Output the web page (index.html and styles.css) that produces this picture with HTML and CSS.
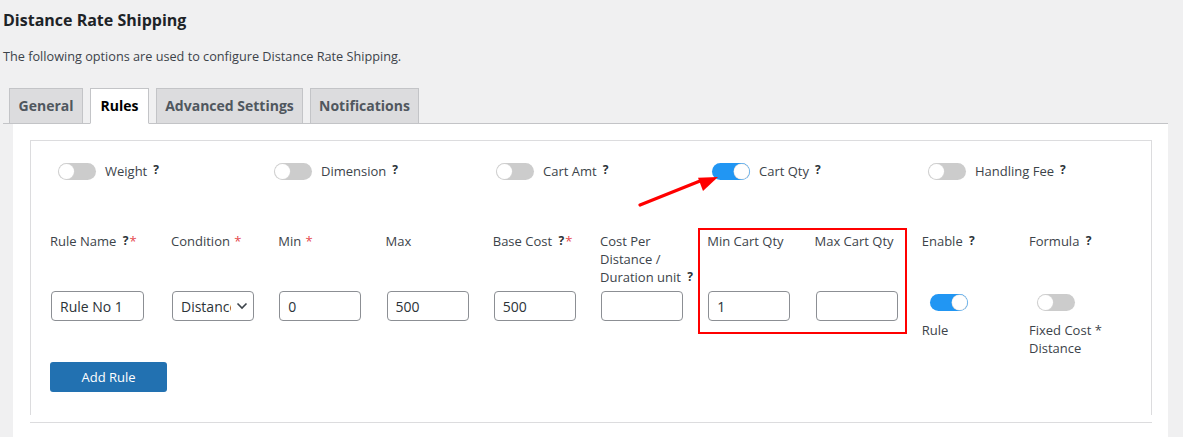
FILE: index.html
```html
<!DOCTYPE html>
<html lang="en">
<head>
  <meta charset="UTF-8" />
  <title>Distance Rate Shipping</title>
  <link rel="stylesheet" href="styles.css">
</head>
<body>
  <div class="wrap">
    <h2 class="title">Distance Rate Shipping</h2>
    <p class="desc">The following options are used to configure Distance Rate Shipping.</p>

    <nav class="tabs">
      <a class="tab tab-general">General</a>
      <a class="tab tab-rules active">Rules</a>
      <a class="tab tab-advanced">Advanced Settings</a>
      <a class="tab tab-notify">Notifications</a>
    </nav>

    <div class="panel">
      <div class="box">
        <div class="switches">
          <div class="switch-item"><span class="switch"></span><span class="switch-label">Weight</span><span class="help">?</span></div>
          <div class="switch-item"><span class="switch"></span><span class="switch-label">Dimension</span><span class="help">?</span></div>
          <div class="switch-item"><span class="switch"></span><span class="switch-label">Cart Amt</span><span class="help">?</span></div>
          <div class="switch-item"><span class="switch on"></span><span class="switch-label">Cart Qty</span><span class="help">?</span></div>
          <div class="switch-item"><span class="switch"></span><span class="switch-label">Handling Fee</span><span class="help">?</span></div>
        </div>

        <div class="rules">
          <div class="head">Rule Name <span class="help">?</span><span class="req">*</span></div>
          <div class="head">Condition <span class="req">*</span></div>
          <div class="head">Min <span class="req">*</span></div>
          <div class="head">Max</div>
          <div class="head">Base Cost <span class="help">?</span><span class="req">*</span></div>
          <div class="head">Cost Per Distance / Duration unit <span class="help">?</span></div>
          <div class="head">Min Cart Qty</div>
          <div class="head">Max Cart Qty</div>
          <div class="head">Enable <span class="help">?</span></div>
          <div class="head">Formula <span class="help">?</span></div>

          <div class="cell"><input class="field field-name" type="text" value="Rule No 1"></div>
          <div class="cell">
            <div class="select-wrap">
              <select class="field field-select"><option>Distance</option></select>
              <svg class="chevron" width="12" height="8" viewBox="0 0 12 8"><path d="M1.5 1.5 L6 6 L10.5 1.5" fill="none" stroke="#3c434a" stroke-width="1.6"/></svg>
            </div>
          </div>
          <div class="cell"><input class="field" type="text" value="0"></div>
          <div class="cell"><input class="field" type="text" value="500"></div>
          <div class="cell"><input class="field" type="text" value="500"></div>
          <div class="cell"><input class="field" type="text" value=""></div>
          <div class="cell"><input class="field" type="text" value="1"></div>
          <div class="cell"><input class="field" type="text" value=""></div>
          <div class="cell cell-switch"><span class="switch on"></span><div class="note">Rule</div></div>
          <div class="cell cell-switch"><span class="switch"></span><div class="note">Fixed Cost * Distance</div></div>
        </div>

        <button class="add-rule">Add Rule</button>
      </div>
      <div class="box-end"></div>
    </div>
  </div>

  <!-- annotations drawn over the screenshot -->
  <div class="callout-box"></div>
  <svg class="callout-arrow" width="90" height="45" viewBox="0 0 90 45">
    <line x1="2" y1="39" x2="62" y2="15" stroke="#f00" stroke-width="3.2" stroke-linecap="round"/>
    <polygon points="80,11 60,11.7 65,25" fill="#f00"/>
  </svg>
</body>
</html>
```

FILE: styles.css
```css
* {
  box-sizing: border-box;
}
html, body {
  margin: 0;
  padding: 0;
  background: #f0f0f1;
  font-family: 'Open Sans', 'Noto Sans', sans-serif;
  font-size: 13px;
  color: #3c434a;
}
.wrap {
  padding: 10px 15px 0 3px;
}
.title {
  margin: 0;
  font-size: 16px;
  line-height: 20px;
  font-weight: 700;
  color: #1d2327;
}
.desc {
  margin: 17px 0 0 0;
  line-height: 18px;
  font-size: 12.7px;
}

/* Tabs */
.tabs {
  display: flex;
  gap: 7px;
  margin-top: 23px;
  padding-left: 6px;
  border-bottom: 1px solid #c3c4c7;
}
.tab {
  display: flex;
  align-items: center;
  justify-content: center;
  height: 35px;
  border: 1px solid #c3c4c7;
  border-bottom: none;
  background: #dcdcde;
  color: #50575e;
  font-size: 14px;
  font-weight: 700;
  margin-bottom: -1px;
  padding-bottom: 1px;
}
.tab-general { width: 74px; }
.tab-rules { width: 59px; }
.tab-advanced { width: 147px; }
.tab-notify { width: 109px; }
.tab.active {
  background: #fff;
  color: #000;
  height: 36px;
  border-bottom: 1px solid #fff;
}

/* Panel */
.panel {
  margin-left: 10px;
  background: #fff;
  padding: 16px 16px 40px 17px;
}
.box {
  border: 1px solid #dcdcde;
  border-bottom: none;
  padding: 22px 0 23px 0;
}
.box-end {
  margin-top: 7px;
  border-top: 1px solid #dcdcde;
}

/* Switches */
.switches {
  display: grid;
  grid-template-columns: 216px 222px 216px 216px auto;
  padding-left: 27px;
}
.switch-item {
  display: flex;
  align-items: center;
  height: 17px;
}
.switch {
  position: relative;
  display: inline-block;
  width: 38px;
  height: 17px;
  border-radius: 9px;
  background: #ccc;
  flex-shrink: 0;
}
.switch::after {
  content: "";
  position: absolute;
  top: 1px;
  left: 1px;
  width: 15px;
  height: 15px;
  border-radius: 50%;
  background: #fff;
  box-shadow: 0 0 0 0.5px #d5d5d5;
}
.switch.on {
  background: #2196f3;
}
.switch.on::after {
  left: 22px;
}
.switch-label {
  margin-left: 9px;
  position: relative;
  top: -1px;
}
.switch-item .help {
  top: -2px;
}
.help {
  font-weight: 700;
  color: #2c3338;
  font-size: 12px;
  margin-left: 6px;
  position: relative;
  top: -1px;
}
.req {
  color: #e5484d;
  margin-left: 1px;
}

/* Rules table */
.rules {
  display: grid;
  grid-template-columns: 121px repeat(9, 107.25px);
  grid-template-rows: 59px auto;
  margin: 52px 0 0 19px;
}
.head {
  line-height: 18px;
  padding-right: 6px;
}
.head .help {
  margin-left: 3px;
}
.cell {
  line-height: 18px;
}
.field {
  display: block;
  height: 30px;
  width: 82px;
  margin-left: 1px;
  border: 1px solid #8c8f94;
  border-radius: 4px;
  padding: 0 8px;
  font-family: inherit;
  font-size: 14px;
  color: #2c3338;
  background: #fff;
}
.field-name {
  width: 93px;
}
.select-wrap {
  position: relative;
  width: 82px;
  margin-left: 1px;
}
.field-select {
  margin-left: 0;
  appearance: none;
  -webkit-appearance: none;
  padding: 0 22px 0 8px;
  overflow: hidden;
}
.chevron {
  position: absolute;
  right: 6px;
  top: 11px;
}
.cell-switch {
  padding-top: 3px;
}
.cell-switch .switch {
  margin-left: 8px;
}
.note {
  margin-top: 6px;
  padding-right: 10px;
}

/* Button */
.add-rule {
  display: block;
  margin: 5px 0 0 19px;
  width: 117px;
  height: 30px;
  border: none;
  border-radius: 3px;
  background: #2271b1;
  color: #fff;
  font-family: inherit;
  font-size: 13px;
}

/* Annotations */
.callout-box {
  position: absolute;
  left: 698px;
  top: 228px;
  width: 209px;
  height: 106px;
  border: 2px solid #f00;
}
.callout-arrow {
  position: absolute;
  left: 638px;
  top: 166px;
}
```
